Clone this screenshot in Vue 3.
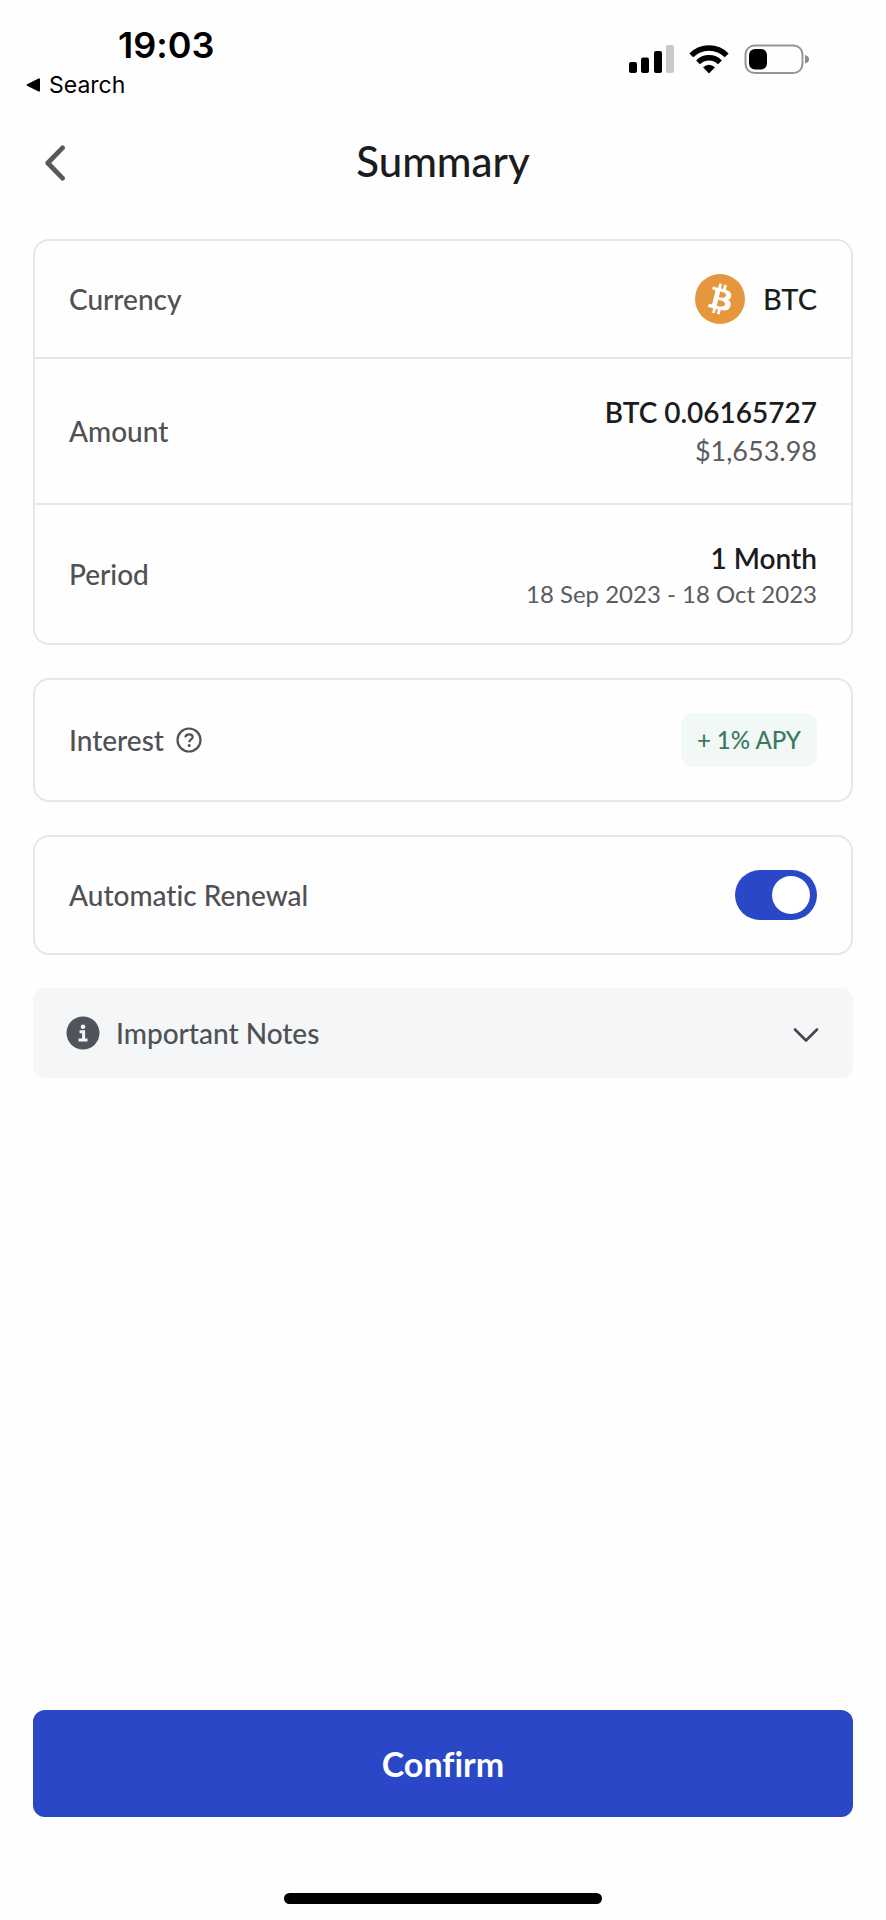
<script setup>
import { ref } from 'vue'

const autoRenewal = ref(true)
const notesOpen = ref(false)
</script>

<template>
  <div class="screen">
    <div class="status">
      <div class="status-left">
        <time class="clock">19:03</time>
        <button type="button" class="return">
          <svg width="14" height="14" viewBox="0 0 14 14" aria-hidden="true">
            <path d="M1 6.2 12.6 .4Q14 0 14 1.4V12.6Q14 14 12.6 13.6L1 7.8Q0 7 1 6.2Z" fill="#000" />
          </svg>
          <span>Search</span>
        </button>
      </div>
      <svg class="status-icons" width="180" height="30" viewBox="0 0 180 30" aria-hidden="true">
        <rect x="0" y="18" width="8" height="11" rx="2" />
        <rect x="12" y="13.500" width="8" height="15.500" rx="2" />
        <rect x="25" y="7" width="8" height="22" rx="2" />
        <rect x="37" y="1" width="8" height="28" rx="2" fill="#c9c9c9" />
        <g fill="none" stroke="#000" stroke-width="5.400">
          <path d="M62.300 11.300a25 25 0 0 1 35.400 0" />
          <path d="M69 18.300a15.500 15.500 0 0 1 22 0" />
        </g>
        <path d="M80 29.500l-6-6.200q6-5.200 12 0z" />
        <rect x="116.500" y="1.500" width="57" height="27.500" rx="9" fill="none" stroke="#959595" stroke-width="2" />
        <rect x="120" y="5" width="18" height="20.500" rx="6" />
        <path d="M176 11v8.500q4-1 4-4.200t-4-4.300z" fill="#8a8a8a" />
      </svg>
    </div>

    <header class="header">
      <button type="button" class="back" aria-label="Back">
        <svg width="20" height="36" viewBox="0 0 20 36" aria-hidden="true">
          <path d="M17.500 2.800 2.800 18l14.700 15.200" fill="none" stroke="#58595b" stroke-width="4.800" stroke-linecap="round" stroke-linejoin="round" />
        </svg>
      </button>
      <h1 class="title">Summary</h1>
    </header>

    <main class="content">
      <dl class="card">
        <div class="row">
          <dt class="label">Currency</dt>
          <dd class="coin">
            <svg width="50" height="50" viewBox="0 0 32 32" aria-hidden="true">
              <circle cx="16" cy="16" r="16" fill="#e6973d" />
              <path fill="#fff" d="M23.189 14.020c.314-2.096-1.283-3.223-3.465-3.975l.708-2.840-1.728-.430-.690 2.765c-.454-.114-.920-.220-1.385-.326l.695-2.783L15.596 6l-.708 2.839c-.376-.086-.746-.170-1.104-.260l.002-.009-2.384-.595-.460 1.846s1.283.294 1.256.312c.700.175.826.638.805 1.006l-.806 3.235c.048.012.110.030.180.057l-.183-.045-1.130 4.532c-.086.212-.303.531-.793.410.018.025-1.256-.313-1.256-.313l-.858 1.978 2.250.561c.418.105.828.215 1.231.318l-.715 2.872 1.727.430.708-2.840c.472.127.930.245 1.378.357l-.706 2.828 1.728.430.715-2.866c2.948.558 5.164.333 6.097-2.333.752-2.146-.037-3.385-1.588-4.192 1.130-.260 1.980-1.003 2.207-2.538zm-3.950 5.538c-.533 2.147-4.148.986-5.320.695l.950-3.805c1.172.293 4.929.872 4.370 3.110zm.535-5.569c-.487 1.953-3.495.960-4.470.717l.860-3.450c.975.243 4.118.696 3.610 2.733z" />
            </svg>
            <span class="value">BTC</span>
          </dd>
        </div>
        <div class="row amount">
          <dt class="label">Amount</dt>
          <dd class="stack">
            <span class="value strong">BTC 0.06165727</span>
            <span class="fiat">$1,653.98</span>
          </dd>
        </div>
        <div class="row period">
          <dt class="label">Period</dt>
          <dd class="stack">
            <span class="value strong">1 Month</span>
            <span class="dates">18 Sep 2023 - 18 Oct 2023</span>
          </dd>
        </div>
      </dl>

      <section class="card">
        <div class="row interest">
          <div class="label with-help">
            <span>Interest</span>
            <button type="button" class="help" aria-label="About interest">
              <svg width="26" height="26" viewBox="0 0 26 26" aria-hidden="true">
                <circle cx="13" cy="13" r="11.500" fill="none" stroke="#4f5154" stroke-width="2.200" />
                <path d="M9.400 10.400c.2-2 1.700-3.100 3.700-3.100s3.600 1.200 3.600 2.900c0 2.200-3.400 2.400-3.400 5" fill="none" stroke="#4f5154" stroke-width="2.200" />
                <circle cx="13.200" cy="18.400" r="1.500" fill="#4f5154" />
              </svg>
            </button>
          </div>
          <span class="badge">+ 1% APY</span>
        </div>
      </section>

      <section class="card">
        <div class="row">
          <label class="label" for="auto-renewal">Automatic Renewal</label>
          <input id="auto-renewal" v-model="autoRenewal" type="checkbox" role="switch" class="switch" />
        </div>
      </section>

      <button type="button" class="notes" :aria-expanded="notesOpen" @click="notesOpen = !notesOpen">
        <svg width="34" height="34" viewBox="0 0 34 34" aria-hidden="true">
          <circle cx="17" cy="17" r="16.500" fill="#4f535b" />
          <circle cx="17" cy="10.800" r="2.300" fill="#f4f6f8" />
          <path d="M13.500 15.800H17.600V24M12.500 24h9" fill="none" stroke="#f4f6f8" stroke-width="3" />
        </svg>
        <span class="label">Important Notes</span>
        <svg class="chevron" width="26" height="20" viewBox="0 0 26 20" aria-hidden="true">
          <path d="M2 6.500 13 17.500 24 6.500" fill="none" stroke="#45474b" stroke-width="2.600" stroke-linecap="round" stroke-linejoin="round" />
        </svg>
      </button>
    </main>

    <footer class="footer">
      <button type="button" class="confirm">Confirm</button>
      <div class="home-bar"></div>
    </footer>
  </div>
</template>

<style>
body {
  margin: 0;
  background: #fefefe;
}
</style>

<style scoped>
.screen {
  display: flex;
  flex-direction: column;
  box-sizing: border-box;
  min-height: 100vh;
  background: #fefefe;
  color: #1b1c1e;
  font-family: Lato, "Open Sans", sans-serif;
  font-variant-ligatures: none;
}

button {
  padding: 0;
  border: 0;
  background: none;
  color: inherit;
  font: inherit;
  font-variant-ligatures: none;
  cursor: pointer;
}

svg {
  display: block;
  flex: none;
}

.status {
  display: flex;
  justify-content: space-between;
  align-items: flex-start;
  padding: 24px 77px 0 26px;
  color: #000;
  font-family: Inter, "Liberation Sans", sans-serif;
}

.status-left {
  display: flex;
  flex-direction: column;
  align-items: flex-start;
}

.clock {
  padding-left: 92px;
  font-size: 36px;
  font-weight: 600;
  line-height: 42px;
}

.return {
  display: flex;
  align-items: center;
  gap: 9px;
  font-size: 23px;
  line-height: 38px;
}

.status-icons {
  margin-top: 20px;
}

.header {
  display: grid;
  grid-template-columns: 40px 1fr 40px;
  align-items: start;
  padding: 34px 45px 51px;
}

.back {
  display: flex;
  align-items: center;
  height: 50px;
}

.title {
  grid-column: 2;
  margin: 0;
  font-size: 42px;
  font-weight: 500;
  line-height: 46px;
  text-align: center;
}

.content {
  display: flex;
  flex: 1;
  flex-direction: column;
  gap: 33px;
  padding: 0 33px;
}

.card {
  margin: 0;
  border: 2px solid #e5e7e8;
  border-radius: 16px;
}

.row {
  display: flex;
  justify-content: space-between;
  align-items: center;
  box-sizing: border-box;
  min-height: 116px;
  padding: 32px 34px;
}

.row + .row {
  border-top: 2px solid #e5e7e8;
}

.amount,
.period {
  padding-top: 33px;
  padding-bottom: 33px;
}

.interest {
  min-height: 120px;
}

.label {
  color: #4f5154;
  font-size: 28px;
  font-weight: 500;
  line-height: 34px;
}

dd {
  margin: 0;
}

.coin {
  display: flex;
  align-items: center;
  gap: 18px;
}

.stack {
  display: flex;
  flex-direction: column;
  align-items: flex-end;
}

.value {
  font-size: 29px;
  font-weight: 500;
  line-height: 40px;
}

.strong {
  font-size: 28px;
  font-weight: 600;
}

.fiat {
  color: #5a5c5f;
  font-size: 27px;
  line-height: 38px;
}

.dates {
  color: #5a5c5f;
  font-size: 24px;
  line-height: 32px;
}

.with-help {
  display: flex;
  align-items: center;
  gap: 12px;
}

.badge {
  padding: 10px 16px;
  border-radius: 12px;
  background: #f1f8f6;
  color: #3b7a61;
  font-size: 24px;
  font-weight: 500;
  line-height: 34px;
}

.switch {
  appearance: none;
  display: flex;
  align-items: center;
  box-sizing: border-box;
  width: 82px;
  height: 50px;
  margin: 0;
  padding: 0 7px;
  border-radius: 25px;
  background: #c4c8ce;
  cursor: pointer;
}

.switch::before {
  width: 38px;
  height: 38px;
  border-radius: 50%;
  background: #fff;
  content: "";
}

.switch:checked {
  justify-content: flex-end;
  background: #2947c7;
}

.notes {
  display: flex;
  align-items: center;
  gap: 16px;
  padding: 28px 34px 28px 33px;
  border-radius: 12px;
  background: #f4f6f8;
  text-align: left;
}

.chevron {
  margin-left: auto;
}

.footer {
  display: flex;
  flex-direction: column;
  gap: 76px;
  padding: 0 33px 16px;
}

.confirm {
  padding: 33px;
  border-radius: 12px;
  background: #2947c7;
  color: #fff;
  font-size: 34px;
  font-weight: 700;
  line-height: 41px;
}

.home-bar {
  align-self: center;
  width: 318px;
  height: 11px;
  border-radius: 6px;
  background: #000;
}
</style>
